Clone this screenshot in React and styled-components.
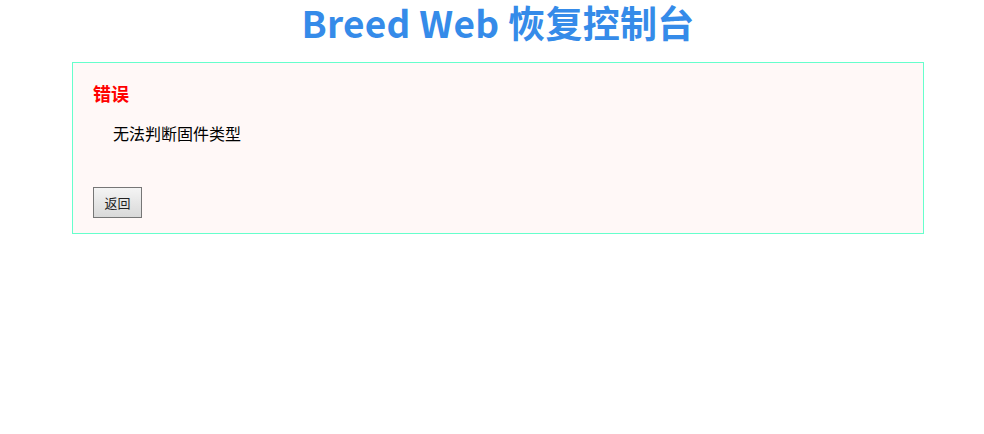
import React from "react";
import styled, { createGlobalStyle } from "styled-components";

const Global = createGlobalStyle`
  html, body { margin: 0; padding: 0; background: #fff; }
  body { font-family: "Noto Sans CJK SC", "Noto Sans", sans-serif; }
`;

const Page = styled.div`
  padding-left: 72px;
  width: 852px;
`;

const Title = styled.h1`
  margin: 0;
  padding: 0 0 18px 0;
  line-height: 44px;
  text-align: center;
  font-size: 37px;
  font-weight: 700;
  color: #358be9;
  letter-spacing: 0.3px;
`;

const Box = styled.div`
  box-sizing: border-box;
  width: 852px;
  height: 172px;
  border: 1px solid #66ffcc;
  background: #fff8f7;
  padding: 16px 20px 0 20px;
  display: flex;
  flex-direction: column;
`;

const ErrTitle = styled.div`
  color: #ff0000;
  font-size: 18px;
  font-weight: 700;
  line-height: 28px;
`;

const Message = styled.div`
  margin-top: 14px;
  padding-left: 20px;
  font-size: 16px;
  line-height: 24px;
  color: #000;
`;

const Button = styled.button`
  margin-top: 42px;
  align-self: flex-start;
  width: 49px;
  height: 31px;
  border: 1px solid #767676;
  border-radius: 0;
  background: linear-gradient(#f4f4f4, #d9d9d9);
  font-family: "Noto Sans CJK SC", sans-serif;
  font-size: 13px;
  color: #222;
  padding: 0;
`;

export default function App() {
  return (
    <>
      <Global />
      <Page>
        <Title>Breed Web 恢复控制台</Title>
        <Box>
          <ErrTitle>错误</ErrTitle>
          <Message>无法判断固件类型</Message>
          <Button>返回</Button>
        </Box>
      </Page>
    </>
  );
}
